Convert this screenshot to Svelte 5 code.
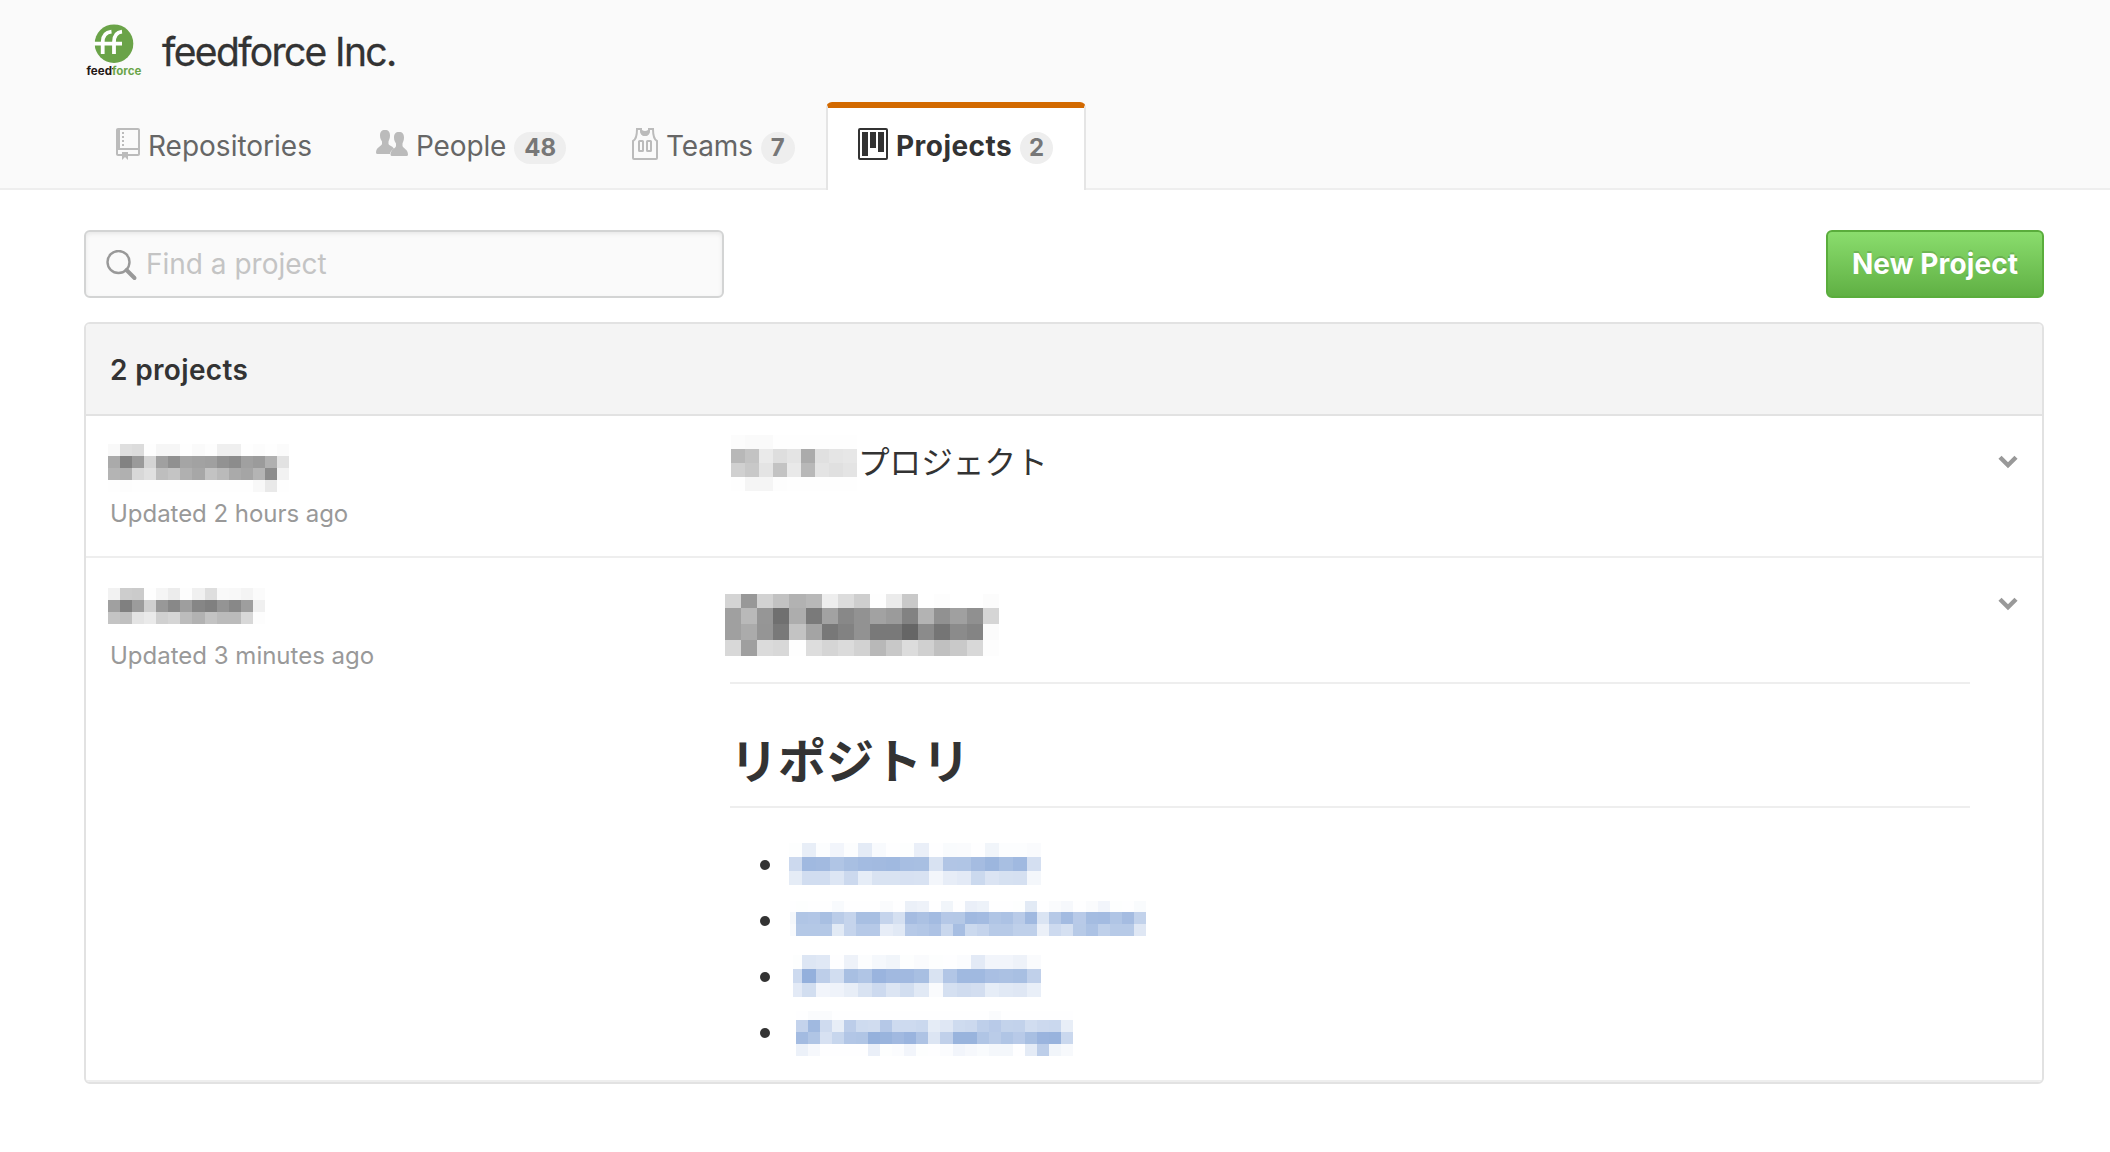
<script>
  // Each redacted label is a grid of two-digit hex intensities, one per cell.
  // `trim` narrows the first cell from the left.
  const owner1 = { cell: 12.07, hs: [12, 12, 12, 12], rows: [
    'f9dfdcfef6f6fefafdefeffefcfefb', 'aa829ad4a090a5a2a0928ca09bb0e2',
    'b4b0d8e0bec4b0a7c3baaaa5b48cf2', 'fefdfefefefefefefefefefef8e9fe'] };
  const owner2 = { cell: 12.07, hs: [12, 12, 12], rows: [
    'f2cdcbfef5ecfdf0def9f8f4fb', 'a0809ccf98889e868094889ef0', 'c4c0e4ead0d5bcb2c3bbbbd8fd'] };
  const inlineName = { cell: 14.05, hs: [14, 14, 14, 14], rows: [
    'fcfafafefefefefefe', 'b8c3eadee4abe0e5e7', 'd0c8e4c3e9b8e4e0e4', 'fef5f5fdfefefefefe'] };
  const heading = { cell: 16.1, hs: [14, 16, 16, 16], rows: [
    'd498d2c2b2b8eedccefeebc9fffdfffffc', 'a0b99670ad7aa28892a29b82b391a090d5',
    'a0ab9579c3a47882927979668b758b84fb', 'd89fdbd8feddd5dbd2b8c8dcd0c0c9d8fd'] };
  const links = [
    { blue: true, cell: 14.05, trim: 1, hs: [14, 14, 14], rows: [
      'fde8fcf2fce4f8fefdeafef9fafef1fcfcfa', 'cca0a2b0a8a3a2a0a7a8d8b1b0a59ca8a0d4',
      'e5d1d1ddcce6d9d9d7d8f3e7e3cbdbd6d5f4'] },
    { blue: true, cell: 12.06, trim: 6, hs: [11, 12, 12], rows: [
      'fefdfefef8fefefefafeebeefef1feeaedfefefde2fefaf6fefaf2fdfef9',
      'f4b0b2a8bac5a8a8c5d5a5aba3b5b4a0a3b0acb9a0dab6a3b8a4a3b0a5c2',
      'f8b4b4b4e2c5b6b6e7e1b6b3adc9a7cbc5b7b7bfbfebcdd5b7acbfb7b7df'] },
    { blue: true, cell: 14.05, trim: 5, hs: [14, 14, 14], rows: [
      'fddde0feeefcf5f1fdfafdfefbe3f2f2eefa', 'cd94bdd1a8b09aa1a1a8d9b2a0a0a9aba8c0',
      'e3d2f2efe8d9cddcd2e1fad5d0d3e6e1dfe9'] },
    { blue: true, cell: 12.04, hs: [9, 12, 12, 12], rows: [
      'fefafafefefefefefefefefefefefefefafefefefefefe',
      'c4a0cfe8bcced0b5cdcdcae5dfceccbeb8c3c2d1cccae8',
      'a3b0d7c7b2b09599a19aaedcc09999b0bab0b8a89a98ca',
      'ecf6fefefefeeafdfbf2fdfefbf2f6f9f4f4fee4bdf1f7'] }
  ];

  function paint(hex, blue) {
    const v = parseInt(hex, 16);
    if (!blue) return `rgb(${v},${v},${v})`;
    const d = 255 - v;
    return `rgb(${v},${Math.round(255 - d * 0.74)},${Math.round(255 - d * 0.33)})`;
  }
  function cells(m) {
    const out = [];
    let y = 0;
    m.rows.forEach((row, r) => {
      for (let c = 0; c < row.length / 2; c++) {
        const x = c === 0 ? (m.trim ?? 0) : Math.round(c * m.cell);
        out.push({ x, y, w: Math.round((c + 1) * m.cell) - x, h: m.hs[r], f: paint(row.slice(c * 2, c * 2 + 2), m.blue) });
      }
      y += m.hs[r];
    });
    return { out, w: Math.round((m.rows[0].length / 2) * m.cell), h: y };
  }
</script>

{#snippet mosaic(m)}
  {@const g = cells(m)}
  <svg class="mosaic" width={g.w} height={g.h} shape-rendering="crispEdges" aria-hidden="true">
    {#each g.out as c}<rect x={c.x} y={c.y} width={c.w} height={c.h} fill={c.f} />{/each}
  </svg>
{/snippet}

{#snippet chevron()}
  <svg class="chevron" width="20" height="14" viewBox="0 0 20 14"><path d="M2 2.2 10 10.2 18 2.2" fill="none" stroke="#999" stroke-width="4.4" /></svg>
{/snippet}

<header>
  <div class="org">
    <svg class="logo" width="60" height="70" viewBox="0 0 60 70">
      <defs>
        <linearGradient id="wordmark" gradientUnits="userSpaceOnUse" x1="2" x2="58" y1="0" y2="0">
          <stop offset="0.475" stop-color="#221815" /><stop offset="0.475" stop-color="#6aa348" />
        </linearGradient>
      </defs>
      <circle cx="30" cy="29.7" r="19.3" fill="#6aa348" />
      <path d="M10 29.700H38M18.700 40V28Q18.700 18.500 27.500 17.600M30 40V28Q30 18.500 38 17.600" fill="none" stroke="#fff" stroke-width="3.800" />
      <text x="2.500" y="60.600" textLength="55" lengthAdjust="spacingAndGlyphs" fill="url(#wordmark)">feedforce</text>
    </svg>
    <h1>feedforce Inc.</h1>
  </div>
  <nav>
    <div class="tab repos">
      <svg width="24" height="32" viewBox="0 0 12 16"><path d="M4 9H3V8h1v1zm0-3H3v1h1V6zm0-2H3v1h1V4zm0-2H3v1h1V2zm8-1v12c0 .55-.45 1-1 1H6v2l-1.500-1.500L3 16v-2H1c-.55 0-1-.45-1-1V1c0-.55.45-1 1-1h10c.55 0 1 .45 1 1zm-1 10H1v2h2v-1h3v1h5v-2zm0-10H2v9h9V1z" /></svg>
      <span class="label">Repositories</span>
    </div>
    <div class="tab people">
      <svg width="32" height="32" viewBox="0 0 32 32">
        <path d="M9 2c3.500 0 5 2 5 5.500 0 3-1 4.500-1.500 6v2.500c1 2 5 2.500 5.500 5-2 1-4 2.500-4 5H1.500Q0 26 0 24.500C0 19 5.500 18.500 6 16v-2.500C5 12 4 10.500 4 7.500 4 4 5.500 2 9 2z" />
        <path d="M23 4c3.500 0 5 2 5 5.500 0 3-1 4.500-1.500 6V18c.5 2.500 5.500 3 5.500 8.500q0 1.500-1.500 1.500H16q-1.500 0-1.500-1.500c0-5 5-6 5.500-8.500v-2.500c-1-1.500-2-3-2-6C18 6 19.500 4 23 4z" />
      </svg>
      <span class="label">People</span><span class="count">48</span>
    </div>
    <div class="tab teams">
      <svg width="26" height="32" viewBox="0 0 26 32">
        <path d="M5 1h4v2q1 4 4 4t4-4V1h4q0 10 4 12v17q0 1-1 1H2q-1 0-1-1V13Q5 11 5 1z" fill="none" stroke="#bbb" stroke-width="2" />
        <rect x="7" y="13" width="4" height="10" rx="0.500" fill="none" stroke="#bbb" stroke-width="2" />
        <rect x="15" y="13" width="4" height="10" rx="0.500" fill="none" stroke="#bbb" stroke-width="2" />
        <path d="M8 2h2q3 2 6 0h2q0 6-5 6T8 2z" />
      </svg>
      <span class="label">Teams</span><span class="count">7</span>
    </div>
    <div class="tab active">
      <svg width="30" height="32" viewBox="0 0 30 32">
        <rect x="1" y="1" width="28" height="30" rx="1" fill="none" stroke="#333" stroke-width="2" />
        <path d="M4 4h6v24H4zM12 4h6v16h-6zM20 4h6v20h-6z" />
      </svg>
      <span class="label">Projects</span><span class="count">2</span>
    </div>
  </nav>
</header>

<main>
  <div class="toolbar">
    <div class="search">
      <svg width="32" height="32" viewBox="0 0 32 32"><circle cx="12.500" cy="12" r="11" fill="none" stroke="#999" stroke-width="2.400" /><path d="M20.500 20 28.500 28" stroke="#999" stroke-width="4" stroke-linecap="round" /></svg>
      <span>Find a project</span>
    </div>
    <button><span>New Project</span></button>
  </div>

  <section>
    <h2><span>2 projects</span></h2>
    <article class="first">
      <div class="name">{@render mosaic(owner1)}<p class="hours">Updated 2 hours ago</p></div>
      <div class="body inline">{@render mosaic(inlineName)}<span class="jp">プロジェクト</span></div>
      {@render chevron()}
    </article>
    <article class="second">
      <div class="name">{@render mosaic(owner2)}<p class="minutes">Updated 3 minutes ago</p></div>
      <div class="body">
        <div class="title">{@render mosaic(heading)}</div>
        <h3>リポジトリ</h3>
        <ul>
          {#each links as l, i}
            <li class="l{i}"><i></i>{@render mosaic(l)}</li>
          {/each}
        </ul>
      </div>
      {@render chevron()}
    </article>
  </section>
</main>

<style>
  :global(body) { background: #fff; color: #333; font-family: Inter, "Noto Sans CJK JP", sans-serif; font-size: 28px; }
  h1, h2, h3, p, ul { margin: 0; padding: 0; font-weight: 400; }
  svg { display: block; flex: none; }
  header { box-sizing: border-box; height: 190px; background: #fafafa; border-bottom: 2px solid #eee; }
  .org { display: flex; height: 102px; padding: 14px 0 0 84px; box-sizing: border-box; }
  .logo { overflow: visible; }
  .logo text { font: 700 11.5px Inter, sans-serif; }
  h1 { margin-left: 18px; font-size: 39px; line-height: 48px; margin-top: 14px; letter-spacing: -1.63px; -webkit-text-stroke: 0.3px #333; }
  nav { display: flex; height: 88px; padding-left: 84px; }
  .tab { display: flex; box-sizing: border-box; height: 86px; padding: 26px 32px 0; color: #666; fill: #bbb; line-height: 36px; white-space: nowrap; }
  .repos { width: 260px; }
  .people { width: 256px; }
  .teams { width: 227px; }
  .people .label, .teams .label { letter-spacing: -0.15px; }
  .active { width: 260px; height: 88px; margin-left: -1px; padding: 20px 28px 0 30px; border: 2px solid #e5e5e5; border-top: 6px solid #d26900; border-bottom: 0; border-radius: 6px 6px 0 0; background: #fff; color: #333; fill: #333; font-weight: 700; }
  .active .label { letter-spacing: 0.45px; }
  .label { margin-left: 8px; }
  .count { box-sizing: border-box; height: 32px; margin: 4px 0 0 8px; padding: 0 10px; border-radius: 16px; background: #eee; color: #777; font-size: 24px; font-weight: 700; line-height: 32px; }
  .active .count { padding: 0 9px; }
  main { padding: 40px 66px 0 84px; }
  .toolbar { display: flex; justify-content: space-between; }
  .search { box-sizing: border-box; display: flex; width: 640px; height: 68px; padding: 18px 0 0 20px; border: 2px solid #d3d4d4; border-radius: 6px; background: #fafafa; box-shadow: inset 0 2px 4px rgba(0,0,0,.075); color: #c4c4c4; line-height: 29px; }
  .search span { margin-left: 8px; }
  button { width: 218px; height: 68px; padding: 0; border: 2px solid #5aad3c; border-radius: 6px; background: linear-gradient(#8add6d, #60b044); color: #fff; font: 700 28px Inter, sans-serif; letter-spacing: 0.1px; text-shadow: 0 -2px 0 rgba(0,0,0,.15); white-space: nowrap; }
  section { box-sizing: border-box; height: 762px; margin-top: 24px; border: 2px solid #e2e2e2; border-radius: 6px; overflow: hidden; }
  h2 { box-sizing: border-box; height: 92px; padding: 28px 24px 0; background: #f4f4f4; border-bottom: 2px solid #e2e2e2; font-size: 28px; font-weight: 600; letter-spacing: 0.35px; line-height: 36px; }
  article { box-sizing: border-box; display: grid; grid-template-columns: 622px 1240px 1fr; padding-left: 22px; border-bottom: 2px solid #eee; }
  .first { height: 142px; }
  .second { height: 524px; }
  .name { padding-top: 28px; }
  .second .name { padding-top: 30px; }
  p { margin: 6px 0 0 2px; color: #999; font-size: 24px; line-height: 32px; }
  .hours { letter-spacing: -0.04px; }
  .second p { margin-top: 16px; }
  .inline { display: flex; padding-top: 19px; }
  .inline .mosaic { margin-left: 1px; }
  .first .jp { margin-left: 1px; font: 400 31.6px/50px "Noto Sans CJK JP", sans-serif; }
  .title { height: 126px; padding-top: 36px; box-sizing: border-box; border-bottom: 2px solid #eee; }
  .title .mosaic { margin-left: -5px; }
  h3 { box-sizing: border-box; height: 124px; padding-top: 38px; border-bottom: 2px solid #eee; font: 700 48px/72px "Noto Sans CJK JP", sans-serif; }
  ul { list-style: none; padding: 29px 0 0 30px; }
  li { box-sizing: border-box; display: flex; align-items: flex-start; height: 56px; }
  li i { width: 10px; height: 10px; margin-top: 23px; border-radius: 50%; background: #333; }
  .l0 .mosaic, .l2 .mosaic { margin: 6px 0 0 18px; }
  .l1 .mosaic { margin: 8px 0 0 14px; }
  .l3 .mosaic { margin: 6px 0 0 26px; }
  .chevron { margin: 39px 0 0 28px; }
</style>
